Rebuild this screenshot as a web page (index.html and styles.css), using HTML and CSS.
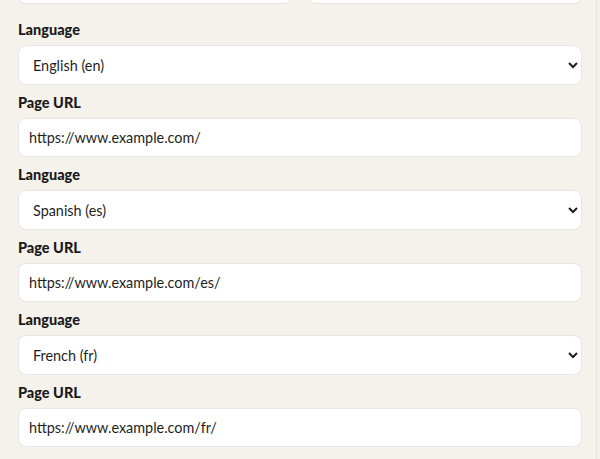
FILE: index.html
```html
<!DOCTYPE html>
<html lang="en">
<head>
<meta charset="utf-8">
<title>Hreflang</title>
<link rel="stylesheet" href="styles.css">
</head>
<body>
<div class="panel">
  <div class="scroller">
    <div class="row-top">
      <input class="field" type="text" value="">
      <input class="field" type="text" value="">
    </div>
    <div class="group">
      <label class="label">Language</label>
      <select class="field select"><option>English (en)</option></select>
    </div>
    <div class="group">
      <label class="label">Page URL</label>
      <input class="field input" type="text" value="https://www.example.com/">
    </div>
    <div class="group">
      <label class="label">Language</label>
      <select class="field select"><option>Spanish (es)</option></select>
    </div>
    <div class="group">
      <label class="label">Page URL</label>
      <input class="field input" type="text" value="https://www.example.com/es/">
    </div>
    <div class="group">
      <label class="label">Language</label>
      <select class="field select"><option>French (fr)</option></select>
    </div>
    <div class="group">
      <label class="label">Page URL</label>
      <input class="field input" type="text" value="https://www.example.com/fr/">
    </div>
  </div>
</div>
</body>
</html>
```
FILE: styles.css
```css
html, body {
  margin: 0;
  padding: 0;
  background: #f3f0ea;
  overflow: hidden;
}
body {
  font-family: "Lato", "Noto Sans", sans-serif;
  color: #1c1c1c;
}
.panel {
  width: 596px;
  height: 459px;
  background: #f5f2ec;
  border-right: 1px solid #e8e4dc;
  overflow: hidden;
}
.scroller {
  margin-top: -36px;
  padding: 0 14px 0 18px;
  display: flex;
  flex-direction: column;
  gap: 8px;
}
.row-top {
  display: grid;
  grid-template-columns: 1fr 1fr;
  gap: 16px;
  margin-bottom: 8px;
}
.group {
  display: flex;
  flex-direction: column;
  gap: 5px;
}
.label {
  font-size: 14.5px;
  font-weight: 900;
  line-height: 20px;
  color: #1a1a1a;
}
.field {
  box-sizing: border-box;
  width: 100%;
  height: 40px;
  margin: 0;
  padding: 0 10px;
  border: 1px solid #e6e6e9;
  border-radius: 8px;
  background: #ffffff;
  font-family: inherit;
  font-size: 14.4px;
  color: #1f1f1f;
  outline: none;
}
.input {
  height: 39px;
}
```
